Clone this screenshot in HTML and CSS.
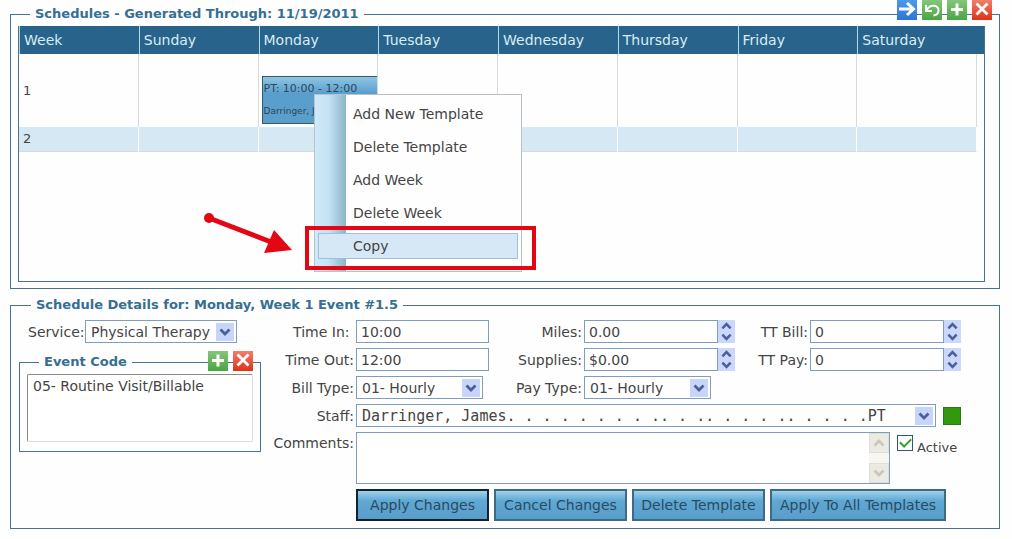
FILE: index.html
```html
<!DOCTYPE html>
<html lang="en">
<head>
<meta charset="utf-8">
<title>Schedules</title>
<link rel="stylesheet" href="styles.css">
</head>
<body>
<svg class="sprite" aria-hidden="true">
  <symbol id="chevron-down" viewBox="0 0 12 8"><path d="M1.500 1.500 6 6l4.500-4.500" fill="none" stroke="currentColor" stroke-width="2.800"/></symbol>
  <symbol id="chevron-up" viewBox="0 0 12 8"><path d="M1.500 6.500 6 2l4.500 4.500" fill="none" stroke="currentColor" stroke-width="2.800"/></symbol>
  <symbol id="plus" viewBox="0 0 20 20"><path d="M10 3.500v12M4 9.500h12" fill="none" stroke="currentColor" stroke-width="3"/></symbol>
  <symbol id="cross" viewBox="0 0 20 20"><path d="M4.500 3.500 15.500 14.500M15.500 3.500 4.500 14.500" fill="none" stroke="currentColor" stroke-width="2.800"/></symbol>
  <symbol id="arrow" viewBox="0 0 20 20"><path d="M2 9h14M10 3 16.500 9 10 15" fill="none" stroke="currentColor" stroke-width="3"/></symbol>
  <symbol id="undo" viewBox="0 0 20 20"><path d="M4 5v6h6M4.500 10.500C8 3.500 17 5 16.500 10.500c0 2.500-2 4.500-5 5" fill="none" stroke="currentColor" stroke-width="2"/></symbol>
</svg>

<main class="page">
  <section class="panel">
    <fieldset class="group">
      <legend>Schedules - Generated Through: 11/19/2011</legend>
      <div class="schedule">
        <table class="weeks">
          <thead>
            <tr><th>Week</th><th>Sunday</th><th>Monday</th><th>Tuesday</th><th>Wednesday</th><th>Thursday</th><th>Friday</th><th>Saturday</th></tr>
          </thead>
          <tbody>
            <tr class="tall"><td>1</td><td></td><td class="has-event"><button type="button" class="event"><span>PT: 10:00 - 12:00</span><span>Darringer, James</span></button></td><td></td><td></td><td></td><td></td><td></td></tr>
            <tr class="alt"><td>2</td><td></td><td></td><td></td><td></td><td></td><td></td><td></td></tr>
          </tbody>
        </table>
      </div>
    </fieldset>
    <div class="tools">
      <button type="button" class="tool blue" aria-label="Go"><svg><use href="#arrow"/></svg></button>
      <button type="button" class="tool green" aria-label="Undo"><svg><use href="#undo"/></svg></button>
      <button type="button" class="tool green" aria-label="Add"><svg><use href="#plus"/></svg></button>
      <button type="button" class="tool red" aria-label="Delete"><svg><use href="#cross"/></svg></button>
    </div>
    <div class="menu" role="menu">
      <button type="button" role="menuitem">Add New Template</button>
      <button type="button" role="menuitem">Delete Template</button>
      <button type="button" role="menuitem">Add Week</button>
      <button type="button" role="menuitem">Delete Week</button>
      <button type="button" role="menuitem" class="current">Copy</button>
    </div>
    <div class="callout"></div>
    <svg class="pointer" viewBox="0 0 90 44" aria-hidden="true"><circle cx="6" cy="7" r="5" fill="#e30613"/><path d="M6 7 68 31" stroke="#e30613" stroke-width="5"/><path d="M71 19 89 39 61 42z" fill="#e30613"/></svg>
  </section>

  <section class="panel">
    <fieldset class="group details">
      <legend>Schedule Details for: Monday, Week 1 Event #1.5</legend>
      <div class="columns">
        <div class="side">
          <div class="service">
            <label for="service">Service:</label>
            <div class="combo"><select id="service"><option>Physical Therapy</option></select><span class="drop"><svg><use href="#chevron-down"/></svg></span></div>
          </div>
          <div class="panel">
            <fieldset class="group codes">
              <legend>Event Code</legend>
              <select size="3" aria-label="Event Code"><option>05- Routine Visit/Billable</option></select>
            </fieldset>
            <div class="tools">
              <button type="button" class="tool green" aria-label="Add code"><svg><use href="#plus"/></svg></button>
              <button type="button" class="tool red" aria-label="Delete code"><svg><use href="#cross"/></svg></button>
            </div>
          </div>
        </div>

        <form class="form">
          <label for="in">Time In:&nbsp;</label>
          <input class="text" id="in" type="text" value="10:00">
          <label for="miles">Miles:</label>
          <div class="spin"><input class="text" id="miles" type="text" value="0.00"><div class="steps"><button type="button" aria-label="More miles"><svg><use href="#chevron-up"/></svg></button><button type="button" aria-label="Fewer miles"><svg><use href="#chevron-down"/></svg></button></div></div>
          <label for="ttbill">TT Bill:</label>
          <div class="spin"><input class="text" id="ttbill" type="text" value="0"><div class="steps"><button type="button" aria-label="Raise bill"><svg><use href="#chevron-up"/></svg></button><button type="button" aria-label="Lower bill"><svg><use href="#chevron-down"/></svg></button></div></div>

          <label for="out">Time Out:</label>
          <input class="text" id="out" type="text" value="12:00">
          <label for="supplies">Supplies:</label>
          <div class="spin"><input class="text" id="supplies" type="text" value="$0.00"><div class="steps"><button type="button" aria-label="More supplies"><svg><use href="#chevron-up"/></svg></button><button type="button" aria-label="Fewer supplies"><svg><use href="#chevron-down"/></svg></button></div></div>
          <label for="ttpay">TT Pay:</label>
          <div class="spin"><input class="text" id="ttpay" type="text" value="0"><div class="steps"><button type="button" aria-label="Raise pay"><svg><use href="#chevron-up"/></svg></button><button type="button" aria-label="Lower pay"><svg><use href="#chevron-down"/></svg></button></div></div>

          <label for="billtype">Bill Type:</label>
          <div class="combo short"><select id="billtype"><option>01- Hourly</option></select><span class="drop"><svg><use href="#chevron-down"/></svg></span></div>
          <label for="paytype">Pay Type:</label>
          <div class="combo short"><select id="paytype"><option>01- Hourly</option></select><span class="drop"><svg><use href="#chevron-down"/></svg></span></div>

          <label class="first" for="staff">Staff:</label>
          <div class="wide staff">
            <div class="combo"><select id="staff"><option>Darringer, James. . . . . . . . .. . .. . . . .. . . . .PT</option></select><span class="drop"><svg><use href="#chevron-down"/></svg></span></div>
            <span class="status"></span>
          </div>

          <label class="first top" for="comments">Comments:</label>
          <div class="wide comments">
            <div class="memo">
              <textarea id="comments"></textarea>
              <div class="scroll"><span><svg><use href="#chevron-up"/></svg></span><span><svg><use href="#chevron-down"/></svg></span></div>
            </div>
            <div class="active"><input type="checkbox" id="active" checked><label for="active">Active</label></div>
          </div>

          <div class="actions">
            <button type="button" class="default">Apply Changes</button>
            <button type="button">Cancel Changes</button>
            <button type="button">Delete Template</button>
            <button type="button">Apply To All Templates</button>
          </div>
        </form>
      </div>
    </fieldset>
  </section>
</main>
</body>
</html>
```
FILE: styles.css
```css
* { box-sizing: border-box; }
body {
  margin: 0;
  background: #fefefe;
  color: #444;
  font: 14px/18px "DejaVu Sans", Verdana, sans-serif;
}
button, input, select, textarea { font: inherit; color: inherit; margin: 0; }
button { padding: 0; cursor: pointer; }
.sprite { display: none; }
.page { padding: 5px 12px 8px 10px; display: flex; flex-direction: column; gap: 7px; }
.panel { position: relative; }

.group { margin: 0; min-width: 0; padding: 3px 14px 6px 7px; border: 1px solid #4a7389; }
.group > legend {
  margin-left: 12px;
  padding: 0 5px;
  font-size: 13px;
  font-weight: bold;
  line-height: 18px;
  color: #356f92;
}

.tools { position: absolute; top: -5px; right: 8px; display: flex; gap: 5px; }
.tool { width: 20px; height: 20px; border: 0; color: #fff; }
.tool svg { display: block; width: 20px; height: 20px; }
.blue { background: linear-gradient(#4c9be8, #2f74d6); }
.green { background: linear-gradient(#84c77a, #4aa544); }
.red { background: linear-gradient(#f0806c, #dd3219); }

.schedule {
  min-height: 256px;
  border: 1px solid #4a7389;
  border-top: 0;
  padding: 0 7px 0 0;
  background: linear-gradient(#27638b, #27638b) 0 0 / 100% 28px no-repeat;
}
.weeks { width: 100%; table-layout: fixed; border-collapse: separate; border-spacing: 0; }
.weeks th {
  height: 28px;
  padding: 0 0 0 4px;
  border-left: 1px solid #b5d9e4;
  color: #d9edf5;
  font-weight: normal;
  text-align: left;
}
.weeks td { height: 25px; padding: 0 4px; border-right: 1px solid #d8dadd; border-bottom: 1px solid #d8dadd; font-size: 13px; }
.weeks .tall td { height: 73px; border-bottom: 0; }
.weeks .alt td { background: #d6e8f4; border-right-color: #fff; }
.weeks .has-event { padding: 18px 0 0 3px; }
.event {
  display: flex;
  flex-direction: column;
  justify-content: space-between;
  width: 100%;
  height: 48px;
  padding: 3px 1px;
  overflow: hidden;
  border: 1px solid #37596c;
  border-right: 0;
  background: linear-gradient(#8fc5e4, #5a9fcc 35%);
  color: #28485b;
  font-size: 11px;
  line-height: 18px;
  text-align: left;
  white-space: nowrap;
}
.event span + span { font-size: 9px; }

.menu {
  position: absolute;
  left: 304px;
  top: 89px;
  width: 208px;
  padding: 6px 3px 12px;
  display: flex;
  flex-direction: column;
  gap: 7px;
  border: 1px solid #b9c2c8;
  background: linear-gradient(90deg, #cfeaf9, #c3e2f3 45%, #8ab4c9) 0 0 / 31px 100% no-repeat #fefefe;
}
.menu button {
  height: 26px;
  padding: 0 0 0 34px;
  border: 1px solid transparent;
  background: none;
  text-align: left;
}
.menu .current { border-color: #9fc0dc; background: #d6e8f5; }
.callout { position: absolute; left: 295px; top: 221px; width: 231px; height: 44px; border: 4px solid #e30613; }
.pointer { position: absolute; left: 193px; top: 206px; width: 90px; height: 44px; }

.details { padding: 6px 38px 7px 8px; }
.columns { display: grid; grid-template-columns: 242px 1fr; gap: 4px; }
.side { display: flex; flex-direction: column; gap: 10px; }
.service { display: flex; align-items: center; justify-content: space-between; padding: 0 24px 0 9px; }
.service .combo { width: 152px; }
.side .tools { top: -2px; }
.codes { padding: 3px 7px 9px; }
.codes select {
  display: block;
  width: 100%;
  height: 68px;
  padding: 3px 0;
  border: 1px solid #dcdcdc;
  border-top-color: #8a8a8a;
  border-left-color: #8a8a8a;
  background: #fff;
  overflow: hidden;
}
.codes option { padding: 0 5px; }

.combo { display: grid; align-items: center; }
.combo > * { grid-area: 1 / 1; }
.combo select {
  appearance: none;
  width: 100%;
  height: 23px;
  padding: 0 20px 0 5px;
  border: 1px solid #809db9;
  border-radius: 0;
  background: #fff;
}
.drop {
  display: grid;
  place-items: center;
  justify-self: end;
  width: 18px;
  height: 18px;
  margin-right: 3px;
  background: #c7d5fa;
  color: #4a609a;
  pointer-events: none;
}
.drop svg { width: 12px; height: 8px; }
.short { width: 127px; }

.form {
  display: grid;
  grid-template-columns: 91px 133fr 95px 151fr 75px 151fr;
  row-gap: 5px;
  align-items: center;
}
.form > label { padding-right: 2px; text-align: right; white-space: nowrap; }
.form > .first { grid-column: 1; }
.form > .top { align-self: start; padding-top: 2px; }
.text { width: 100%; min-width: 0; height: 23px; padding: 0 4px; border: 1px solid #809db9; background: #fff; }
.spin { display: grid; grid-template-columns: 1fr 17px; }
.steps { display: flex; flex-direction: column; }
.steps button { flex: 1; display: grid; place-items: center; border: 0; background: #ccd8fb; color: #4a609a; }
.steps svg { width: 11px; height: 8px; }
.wide { grid-column: 2 / -1; display: grid; }
.staff { grid-template-columns: 1fr 18px; gap: 7px; align-items: center; }
.staff select { font-family: "DejaVu Sans Mono", monospace; font-size: 15px; }
.status { height: 18px; border: 1px solid #247a12; background: #32980c; }
.comments { grid-template-columns: 1fr 64px; gap: 7px; }
.memo { display: grid; grid-template-columns: 1fr 20px; height: 52px; border: 1px solid #809db9; background: #fff; }
.memo textarea { min-width: 0; height: 50px; border: 0; padding: 2px 4px; resize: none; background: none; }
.scroll { display: flex; flex-direction: column; justify-content: space-between; background: #f7f6f2; }
.scroll span { display: grid; place-items: center; height: 20px; background: #ecebe3; border: 1px solid #e0dfd5; color: #c9c8bb; }
.scroll svg { width: 12px; height: 8px; }
.active { display: flex; align-items: flex-start; gap: 4px; padding-top: 3px; }
.active label { padding-top: 4px; font-size: 13px; }
.active input { appearance: none; flex: none; width: 16px; height: 16px; border: 1px solid #2f5878; background: #fff; display: grid; place-items: center; }
.active input:checked::after { content: ""; width: 9px; height: 5px; margin-bottom: 3px; border: solid #2fa02f; border-width: 0 0 2px 2px; rotate: -45deg; }
.actions { grid-column: 2 / -1; display: flex; gap: 5px; }
.actions button {
  height: 32px;
  padding: 0 4px;
  flex: 0 1 133px;
  border: 2px solid #3d6b83;
  background: linear-gradient(#9ed2ec, #5fa8d4 35%, #599dcb);
  color: #2b4a60;
  white-space: nowrap;
}
.actions button:last-child { flex-basis: 176px; }
.actions .default { border-color: #13222c; }
```
